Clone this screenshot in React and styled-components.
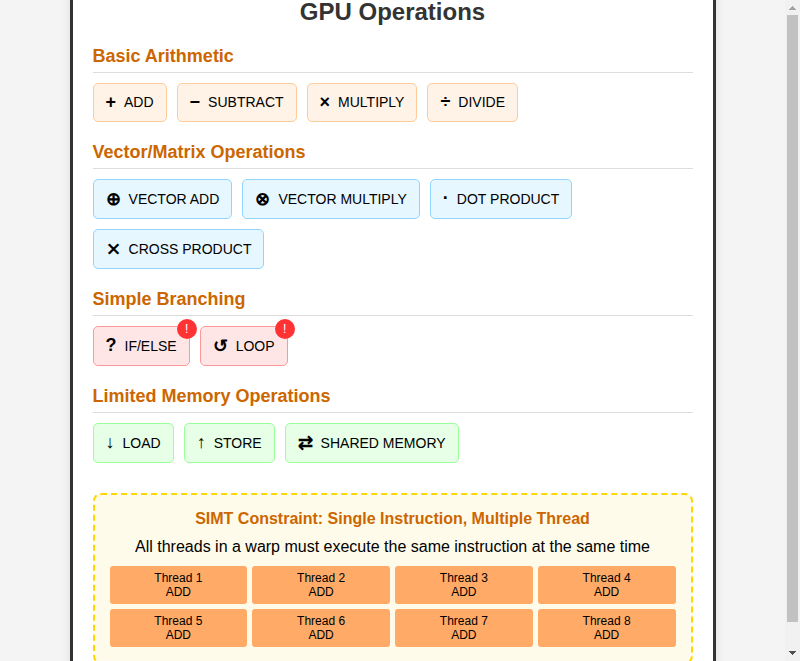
import React from "react";
import styled, { createGlobalStyle } from "styled-components";

const Global = createGlobalStyle`
  * { box-sizing: border-box; }
  html, body { margin: 0; height: 100%; overflow: hidden; }
  body { background: #f4f4f4; font-family: "Liberation Sans", Arial, sans-serif; color: #000; }
`;

const Screen = styled.div`
  display: flex;
  height: 661px;
  overflow: hidden;
`;
const Viewport = styled.main`
  flex: 1;
  height: 661px;
  overflow: hidden;
  display: flex;
  justify-content: center;
  align-items: flex-start;
`;
const Card = styled.div`
  width: 646px;
  height: 720px;
  margin-top: -25.2px;
  flex: none;
  background: #fff;
  border: 3px solid #333;
  border-radius: 10px;
  padding: 20px;
  box-shadow: 0 0 10px rgba(0, 0, 0, 0.1);
`;
const Title = styled.h1`
  margin: 0 0 20px;
  font-size: 24px;
  line-height: 28px;
  text-align: center;
  color: #333;
`;
const Section = styled.section`
  margin-bottom: 20px;
`;
const SectionTitle = styled.h2`
  margin: 0 0 10px;
  padding-bottom: 5px;
  border-bottom: 1px solid #ddd;
  font-size: 18px;
  line-height: 21px;
  color: #cc6600;
`;
const Operations = styled.div`
  display: flex;
  flex-wrap: wrap;
  gap: 10px;
`;
const tones = {
  orange: ["#fff2e6", "#ffcc99"],
  blue: ["#e6f7ff", "#91d5ff"],
  red: ["#ffe6e6", "#ff9999"],
  green: ["#e6ffe6", "#99ff99"],
};
const Operation = styled.div`
  position: relative;
  display: flex;
  align-items: center;
  padding: 8px 12px;
  border: 1px solid ${(p) => tones[p.$tone][1]};
  border-radius: 5px;
  background: ${(p) => tones[p.$tone][0]};
  font-size: 14px;
`;
const Symbol = styled.span`
  margin-right: ${(p) => (p.$tone === "blue" ? 8.08 : 8)}px;
  font-size: 18px;
  font-weight: bold;
`;
const Alert = styled.span`
  position: absolute;
  top: -8px;
  right: -8px;
  width: 20px;
  height: 20px;
  border-radius: 50%;
  display: flex;
  align-items: center;
  justify-content: center;
  background: #ff3333;
  color: #fff;
  font-size: 12px;
`;
const Constraint = styled.section`
  margin-top: 30px;
  padding: 15px;
  border: 2px dashed #ffd700;
  border-radius: 8px;
  background: #fffbea;
  text-align: center;
`;
const ConstraintTitle = styled.h3`
  margin: 0 0 10px;
  font-size: 16px;
  line-height: 18px;
  color: #cc6600;
`;
const Description = styled.p`
  margin: 0 0 10px;
  font-size: 16px;
  line-height: 18px;
`;
const Threads = styled.div`
  display: grid;
  grid-template-columns: repeat(4, 1fr);
  gap: 5px;
`;
const Thread = styled.div`
  padding: 5px;
  border-radius: 3px;
  background: #ffaa66;
  font-size: 12px;
  line-height: 14px;
`;
const Scrollbar = styled.aside`
  width: 15px;
  height: 661px;
  flex: none;
  display: flex;
  flex-direction: column;
  align-items: center;
  background: #f1f1f1;
`;
const ArrowBox = styled.svg`
  width: 15px;
  height: 15px;
  flex: none;
`;
const Thumb = styled.div`
  width: 11px;
  height: 607px;
  background: #c1c1c1;
`;
const Track = styled.div`
  flex: 1;
`;

const sections = [
  { title: "Basic Arithmetic", tone: "orange", ops: [["+", "ADD"], ["−", "SUBTRACT"], ["×", "MULTIPLY"], ["÷", "DIVIDE"]] },
  { title: "Vector/Matrix Operations", tone: "blue", ops: [["⊕", "VECTOR ADD"], ["⊗", "VECTOR MULTIPLY"], ["·", "DOT PRODUCT"], ["⨯", "CROSS PRODUCT"]] },
  { title: "Simple Branching", tone: "red", alert: true, ops: [["?", "IF/ELSE"], ["↺", "LOOP"]] },
  { title: "Limited Memory Operations", tone: "green", ops: [["↓", "LOAD"], ["↑", "STORE"], ["⇄", "SHARED MEMORY"]] },
];

export default function App() {
  return (
    <Screen>
      <Global />
      <Viewport>
        <Card>
          <Title>GPU Operations</Title>
          {sections.map((s) => (
            <Section key={s.title}>
              <SectionTitle>{s.title}</SectionTitle>
              <Operations>
                {s.ops.map(([symbol, name]) => (
                  <Operation key={name} $tone={s.tone}>
                    <Symbol $tone={s.tone}>{symbol}</Symbol>
                    {name}
                    {s.alert && <Alert>!</Alert>}
                  </Operation>
                ))}
              </Operations>
            </Section>
          ))}
          <Constraint>
            <ConstraintTitle>SIMT Constraint: Single Instruction, Multiple Thread</ConstraintTitle>
            <Description>All threads in a warp must execute the same instruction at the same time</Description>
            <Threads>
              {[1, 2, 3, 4, 5, 6, 7, 8].map((n) => (
                <Thread key={n}>
                  Thread {n}
                  <br />
                  ADD
                </Thread>
              ))}
            </Threads>
          </Constraint>
        </Card>
      </Viewport>
      <Scrollbar>
        <ArrowBox viewBox="0 0 15 15"><path d="M7 6h1v1h1v1h1v1h1v1H4V9h1V8h1V7h1Z" fill="#a3a3a3" shapeRendering="crispEdges" /></ArrowBox>
        <Thumb />
        <Track />
        <ArrowBox viewBox="0 0 15 15"><path d="M4 5h7v1h-1v1h-1v1h-1v1H7V8H6V7H5V6H4Z" fill="#505050" shapeRendering="crispEdges" /></ArrowBox>
      </Scrollbar>
    </Screen>
  );
}
